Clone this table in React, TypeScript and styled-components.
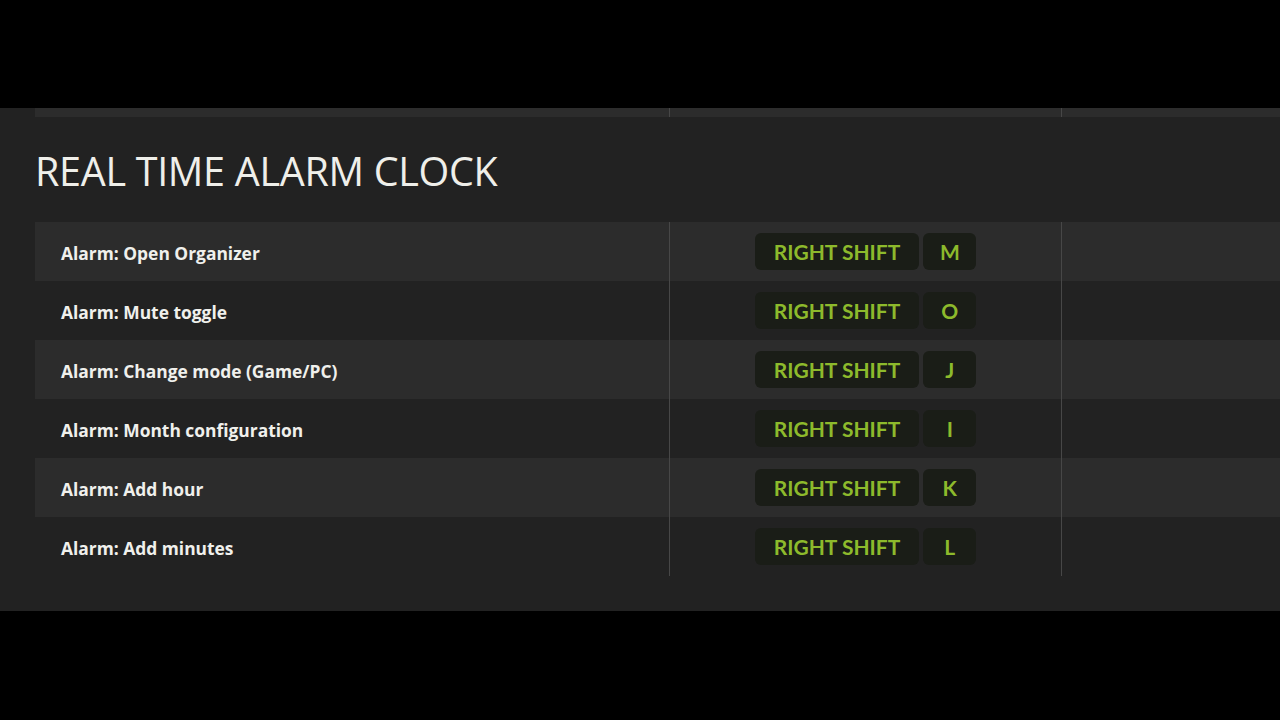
import React from "react";
import styled, { createGlobalStyle } from "styled-components";

const Global = createGlobalStyle`
  html, body { margin: 0; padding: 0; background: #000; }
  body { overflow: hidden; width: 1280px; height: 720px; }
`;

const Page = styled.div`
  width: 1280px;
  height: 720px;
  background: #000;
  padding-top: 108px;
  box-sizing: border-box;
`;

const Panel = styled.section`
  height: 503px;
  background: #222222;
  padding-left: 35px;
  box-sizing: border-box;
  overflow: hidden;
`;

const Row = styled.div<{ $shade: boolean; $h: number }>`
  display: grid;
  grid-template-columns: 634px 392px 1fr;
  height: ${(p) => p.$h}px;
  background: ${(p) => (p.$shade ? "#2c2c2c" : "#222222")};
`;

const Cell = styled.div<{ $divider?: boolean }>`
  display: flex;
  align-items: center;
  border-left: ${(p) => (p.$divider ? "1px solid #474747" : "none")};
`;

const LabelCell = styled(Cell)`
  padding-left: 26px;
  padding-top: 3px;
  font-family: "Open Sans", "Noto Sans", sans-serif;
  font-weight: 700;
  font-size: 17.4px;
  color: #f0f0ec;
`;

const KeyCell = styled(Cell)`
  justify-content: center;
  gap: 4px;
`;

const Title = styled.h1`
  margin: 0;
  height: 105px;
  display: flex;
  align-items: center;
  padding-top: 3px;
  box-sizing: border-box;
  font-family: "Open Sans", "Noto Sans", sans-serif;
  font-weight: 400;
  font-size: 39.5px;
  letter-spacing: -0.3px;
  color: #efefea;
`;

const Key = styled.span<{ $wide?: boolean }>`
  display: inline-flex;
  align-items: center;
  justify-content: center;
  height: 37px;
  padding: 0 ${(p) => (p.$wide ? "19px" : "0")};
  min-width: ${(p) => (p.$wide ? "0" : "53px")};
  box-sizing: border-box;
  border-radius: 6px;
  background: #1a1d17;
  font-family: "Lato", "Noto Sans", sans-serif;
  font-weight: 700;
  font-size: 21px;
  color: #8dba2c;
`;

const rows = [
  { label: "Alarm: Open Organizer", key: "M" },
  { label: "Alarm: Mute toggle", key: "O" },
  { label: "Alarm: Change mode (Game/PC)", key: "J" },
  { label: "Alarm: Month configuration", key: "I" },
  { label: "Alarm: Add hour", key: "K" },
  { label: "Alarm: Add minutes", key: "L" },
];

export default function App() {
  return (
    <Page>
      <Global />
      <Panel>
        <Row $shade $h={9}>
          <Cell />
          <Cell $divider />
          <Cell $divider />
        </Row>
        <Title>REAL TIME ALARM CLOCK</Title>
        {rows.map((r, i) => (
          <Row key={r.label} $shade={i % 2 === 0} $h={59}>
            <LabelCell>{r.label}</LabelCell>
            <KeyCell $divider>
              <Key $wide>RIGHT SHIFT</Key>
              <Key>{r.key}</Key>
            </KeyCell>
            <Cell $divider />
          </Row>
        ))}
      </Panel>
    </Page>
  );
}
